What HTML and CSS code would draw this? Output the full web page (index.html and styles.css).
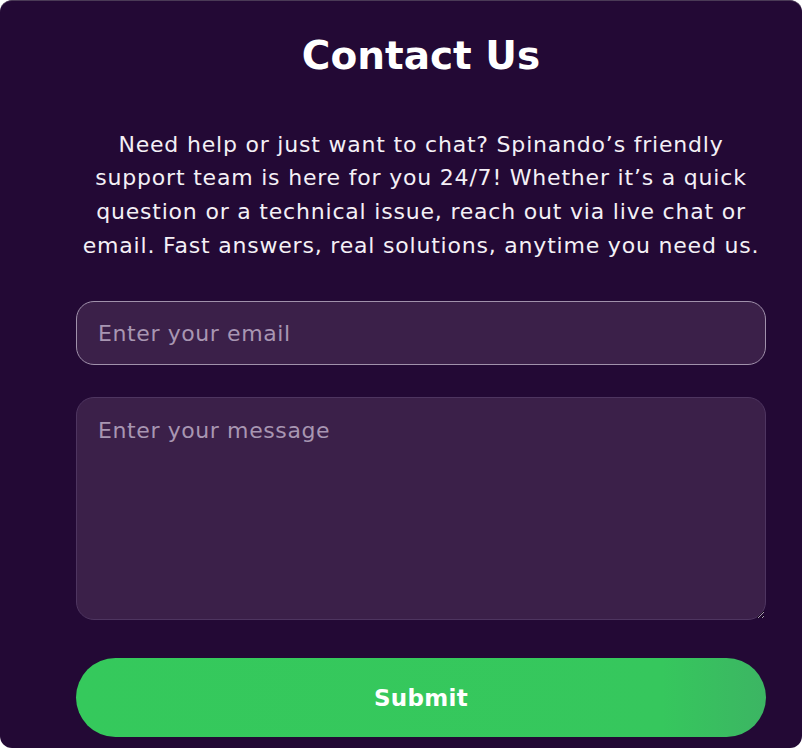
FILE: index.html
```html
<!DOCTYPE html>
<html lang="en">
<head>
<meta charset="utf-8">
<title>Contact Us</title>
<link rel="stylesheet" href="styles.css">
</head>
<body>
<section class="contact">
  <h1 class="contact-title">Contact Us</h1>
  <p class="contact-text">Need help or just want to chat? Spinando’s friendly<br>support team is here for you 24/7! Whether it’s a quick<br>question or a technical issue, reach out via live chat or<br>email. Fast answers, real solutions, anytime you need us.</p>
  <form class="contact-form">
    <input class="field field-email" type="email" placeholder="Enter your email">
    <textarea class="field field-message" placeholder="Enter your message"></textarea>
    <button class="submit" type="button">Submit</button>
  </form>
</section>
</body>
</html>
```
FILE: styles.css
```css
html, body {
  margin: 0;
  padding: 0;
  background: #ffffff;
}
.contact {
  box-sizing: border-box;
  width: 802px;
  height: 748px;
  background: #230935;
  border-radius: 12px;
  border-top: 1px solid #4a3a56;
  padding: 28px 36px 0 76px;
  font-family: "DejaVu Sans", "Open Sans", sans-serif;
  color: #ffffff;
  display: flex;
  flex-direction: column;
  align-items: stretch;
}
.contact-title {
  margin: 0;
  text-align: center;
  font-size: 39px;
  line-height: 54px;
  font-weight: 700;
  letter-spacing: 0;
}
.contact-text {
  margin: 44.5px 0 0;
  text-align: center;
  font-size: 22px;
  line-height: 33.7px;
  letter-spacing: 0.8px;
  color: #f4f0f6;
}
.contact-form {
  margin-top: 39px;
  display: flex;
  flex-direction: column;
  gap: 32px;
}
.field {
  box-sizing: border-box;
  width: 100%;
  background: #3b2049;
  border-radius: 18px;
  font-family: inherit;
  font-size: 22px;
  letter-spacing: 0.6px;
  color: #ffffff;
  padding: 0 21px;
  outline: none;
}
.field::placeholder {
  color: #a896b2;
  opacity: 1;
}
.field-email {
  height: 64px;
  border: 1.5px solid #a091ab;
}
.field-message {
  height: 223px;
  border: 1.5px solid #4e3560;
  padding-top: 20px;
  resize: vertical;
}
.submit {
  margin-top: 6px;
  height: 79px;
  border: none;
  border-radius: 40px;
  background: linear-gradient(90deg, #35c95c 0%, #36c75d 85%, #3cb563 100%);
  color: #ffffff;
  font-family: inherit;
  font-size: 23px;
  font-weight: 700;
  letter-spacing: 0.3px;
  cursor: pointer;
}
```
